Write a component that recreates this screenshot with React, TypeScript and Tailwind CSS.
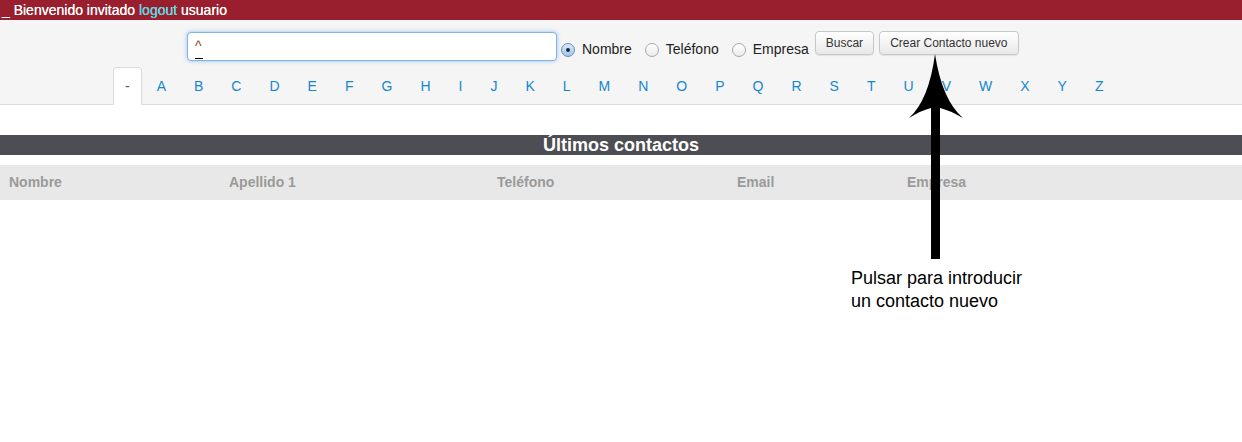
import React from 'react';

const LETTERS = ['-', 'A', 'B', 'C', 'D', 'E', 'F', 'G', 'H', 'I', 'J', 'K', 'L', 'M', 'N', 'O', 'P', 'Q', 'R', 'S', 'T', 'U', 'V', 'W', 'X', 'Y', 'Z'];

const COLUMNS = [
  { label: 'Nombre', width: 'w-[220px]' },
  { label: 'Apellido 1', width: 'w-[268px]' },
  { label: 'Teléfono', width: 'w-[240px]' },
  { label: 'Email', width: 'w-[170px]' },
  { label: 'Empresa', width: 'flex-1' },
];

const Radio = ({ checked, label }: { checked?: boolean; label: string }) => (
  <label className="flex items-center gap-[7px] text-[14px] text-[#222]">
    {checked ? (
      <span className="flex h-[14px] w-[14px] items-center justify-center rounded-full border border-[#6c8fb8] bg-gradient-to-b from-[#d9ebfb] to-[#9fc6ec]">
        <span className="h-[4px] w-[4px] rounded-full bg-[#1c2a3a]" />
      </span>
    ) : (
      <span className="h-[14px] w-[14px] rounded-full border border-[#a8a8a8] bg-gradient-to-b from-white to-[#ececec]" />
    )}
    {label}
  </label>
);

const Button = ({ children }: { children: React.ReactNode }) => (
  <button
    type="button"
    className="h-[24px] rounded-[4px] border border-[#c8c8c8] bg-gradient-to-b from-white to-[#e8e8e8] px-[10px] text-[12px] text-[#333] shadow-[0_1px_1px_rgba(0,0,0,0.08)]"
  >
    {children}
  </button>
);

const App = () => {
  return (
    <div className="relative min-h-[442px] w-full bg-white font-['Liberation_Sans',Arial,sans-serif]">
      {/* top bar */}
      <div className="flex h-[20px] items-center bg-[#9a1f2e] pl-[2px] text-[14px] text-white [text-shadow:0_0_0.5px_white]">
        <span>_ Bienvenido invitado&nbsp;</span>
        <a href="#" className="text-[#35d7e4]">logout</a>
        <span>&nbsp;usuario</span>
      </div>

      {/* search + letter tabs */}
      <div className="border-b border-[#dcdcdc] bg-[#f5f5f5]">
        <div className="flex items-start pl-[187px] pt-[11px]">
          <div className="mt-[1px] flex h-[29px] w-[370px] flex-col rounded-[4px] border border-[#7fb4ea] bg-white pl-[7px] pt-[6px] shadow-[0_0_4px_rgba(82,160,236,0.6)]">
            <span className="text-[14px] leading-[14px] text-[#8a4a1c]">^</span>
            <span className="mt-[5px] h-[1px] w-[8px] bg-black" />
          </div>
          <div className="ml-[4px] mt-[8px] flex items-center gap-[13px]">
            <Radio checked label="Nombre" />
            <Radio label="Teléfono" />
            <Radio label="Empresa" />
          </div>
          <div className="ml-[6px] flex gap-[5px]">
            <Button>Buscar</Button>
            <Button>Crear Contacto nuevo</Button>
          </div>
        </div>
        <ul className="mt-[6px] flex pl-[113px]">
          {LETTERS.map((l, i) => (
            <li
              key={l}
              className={`-mb-px mr-[2px] flex h-[38px] items-center text-[14px] ${
                i === 0
                  ? 'rounded-t-[4px] border border-b-0 border-[#dcdcdc] bg-white px-[11px] text-[#555]'
                  : 'px-[13px] text-[#1487d0]'
              }`}
            >
              {l}
            </li>
          ))}
        </ul>
      </div>

      {/* latest contacts */}
      <div className="mt-[30px] h-[20px] bg-[#4d4e53] text-center text-[18px] font-bold leading-[20px] text-white">
        Últimos contactos
      </div>
      <div className="mt-[10px] flex h-[35px] items-center bg-[#e8e8e8] pl-[9px] text-[14px] font-bold text-[#9a9a9a]">
        {COLUMNS.map(c => (
          <div key={c.label} className={c.width}>
            {c.label}
          </div>
        ))}
      </div>

      {/* annotation arrow */}
      <svg className="absolute left-0 top-0" width="1242" height="442" viewBox="0 0 1242 442">
        <path
          d="M935 54 Q929 100 909 118 Q922 110 931 108 L931 259 L940 259 L940 108 Q949 110 963 118 Q942 100 935 54 Z"
          fill="#000"
        />
      </svg>
      <div className="absolute left-[851px] top-[267px] text-[18px] leading-[23px] text-black">
        Pulsar para introducir
        <br />
        un contacto nuevo
      </div>
    </div>
  );
};

export default App;
